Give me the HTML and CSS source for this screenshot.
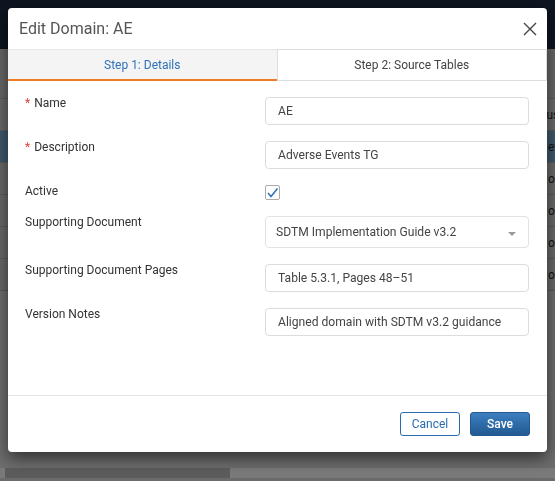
FILE: index.html
```html
<!DOCTYPE html>
<html lang="en">
<head>
    <meta charset="UTF-8">
    <meta name="viewport" content="width=device-width, initial-scale=1.0">
    <title>Edit Domain</title>
    <link rel="stylesheet" href="styles.css">
</head>
<body>
    <div class="app">
        <div class="topbar"></div>
        <div class="toolbar"></div>
        <div class="grid">
            <div class="grid-row grid-head"><span class="cell">Status</span></div>
            <div class="grid-row is-selected"><span class="cell cell-edge">ev</span></div>
            <div class="grid-row"><span class="cell cell-edge">o</span></div>
            <div class="grid-row"><span class="cell cell-edge">o</span></div>
            <div class="grid-row"><span class="cell cell-edge">o</span></div>
            <div class="grid-row"><span class="cell cell-edge">o</span></div>
        </div>
        <div class="filler"></div>
        <div class="hscroll"><div class="hscroll-thumb"></div></div>
    </div>

    <div class="modal">
        <div class="modal-header">
            <h2 class="modal-title">Edit Domain: AE</h2>
            <button class="close-btn" aria-label="Close">
                <svg width="14" height="14" viewBox="0 0 14 14">
                    <path d="M1 1 L13 13 M13 1 L1 13" stroke="#444" stroke-width="1.4" fill="none"/>
                </svg>
            </button>
        </div>

        <div class="tabs">
            <div class="tab active">Step 1: Details</div>
            <div class="tab">Step 2: Source Tables</div>
        </div>

        <div class="modal-body">
            <div class="field">
                <label class="field-label"><span class="req">*</span>Name</label>
                <input class="input" type="text" value="AE">
            </div>
            <div class="field">
                <label class="field-label"><span class="req">*</span>Description</label>
                <input class="input" type="text" value="Adverse Events TG">
            </div>
            <div class="field">
                <label class="field-label">Active</label>
                <span class="checkbox">
                    <svg width="13" height="13" viewBox="0 0 13 13">
                        <path d="M2 7 L5 10.5 L11.5 2.5" stroke="#2f72b8" stroke-width="1.6" fill="none"/>
                    </svg>
                </span>
            </div>
            <div class="field">
                <label class="field-label">Supporting Document</label>
                <div class="select">
                    <span>SDTM Implementation Guide v3.2</span>
                    <span class="caret"></span>
                </div>
            </div>
            <div class="field">
                <label class="field-label">Supporting Document Pages</label>
                <input class="input" type="text" value="Table 5.3.1, Pages 48&#8211;51">
            </div>
            <div class="field">
                <label class="field-label">Version Notes</label>
                <input class="input" type="text" value="Aligned domain with SDTM v3.2 guidance">
            </div>
        </div>

        <div class="modal-footer">
            <button class="btn btn-outline">Cancel</button>
            <button class="btn btn-primary">Save</button>
        </div>
    </div>
</body>
</html>
```
FILE: styles.css
```css
body {
    margin: 0;
    font-family: Roboto, "Liberation Sans", sans-serif;
    overflow: hidden;
    background-color: #6b6b6b;
}

.app {
    height: 100vh;
    display: flex;
    flex-direction: column;
}

.topbar {
    height: 49px;
    background-color: #0e1520;
}

.toolbar {
    height: 49px;
    background-color: #676767;
    border-bottom: 1px solid #5a5a5a;
}

.grid-row {
    height: 31px;
    display: flex;
    align-items: center;
    border-bottom: 1px solid #5a5a5a;
    background-color: #686868;
    font-size: 12px;
    color: #111;
    white-space: nowrap;
}

.grid-head {
    background-color: #6a6a6a;
}

.grid-row.is-selected {
    background-color: #3f586a;
}

.cell {
    margin-left: 525px;
}

.cell-edge {
    margin-left: 548px;
}

.filler {
    flex: 1;
    background-color: #6d6d6d;
}

.hscroll {
    height: 10px;
    margin: 0 0 3px 0;
    padding-left: 5px;
    background-color: #7a7a7a;
}

.hscroll-thumb {
    width: 225px;
    height: 100%;
    background-color: #5c5c5c;
}

/* dialog */
.modal {
    position: fixed;
    top: 8px;
    left: 8px;
    width: 539px;
    height: 444px;
    background-color: #fff;
    border-radius: 4px;
    box-shadow: 0 6px 16px rgba(0, 0, 0, 0.55);
    display: flex;
    flex-direction: column;
    overflow: hidden;
}

.modal-header {
    height: 41px;
    display: flex;
    align-items: center;
    justify-content: space-between;
    padding: 0 10px 0 11px;
}

.modal-title {
    margin: 0;
    font-size: 16px;
    font-weight: 400;
    color: #555;
}

.close-btn {
    border: none;
    background: none;
    padding: 0;
    width: 14px;
    height: 14px;
    cursor: pointer;
    display: flex;
}

.tabs {
    display: flex;
    height: 32px;
}

.tab {
    flex: 1;
    box-sizing: border-box;
    text-align: center;
    font-size: 12px;
    line-height: 30px;
    color: #444;
    border: 1px solid #dedede;
    background-color: #fff;
}

.tab.active {
    color: #2f72b8;
    background-color: #f4f4f4;
    border: none;
    border-top: 1px solid #e6e6e6;
    border-bottom: 2px solid #f37a26;
}

.modal-body {
    flex: 1;
    padding: 16px 18px 0 17px;
}

.field {
    display: flex;
    align-items: flex-start;
    margin-bottom: 16px;
}

.field-label {
    width: 240px;
    flex-shrink: 0;
    font-size: 12px;
    line-height: 14px;
    margin-top: -1px;
    color: #333;
}

.req {
    color: #d9453c;
    margin-right: 4px;
}

.input {
    flex: 1;
    min-width: 0;
    height: 28px;
    box-sizing: border-box;
    border: 1px solid #dcdcdc;
    border-radius: 4px;
    padding: 0 12px;
    font-family: Roboto, "Liberation Sans", sans-serif;
    font-size: 12.1px;
    color: #444;
    outline: none;
}

.checkbox {
    width: 15px;
    height: 15px;
    box-sizing: border-box;
    border: 1px solid #aaa;
    border-radius: 2px;
    display: flex;
    align-items: center;
    justify-content: center;
}

.select {
    flex: 1;
    height: 32px;
    box-sizing: border-box;
    border: 1px solid #e2e2e2;
    border-radius: 4px;
    padding: 0 12px 0 10px;
    display: flex;
    align-items: center;
    justify-content: space-between;
    font-size: 12.1px;
    color: #444;
}

.caret {
    width: 0;
    height: 0;
    border-left: 4px solid transparent;
    border-right: 4px solid transparent;
    border-top: 4px solid #9a9a9a;
    margin-top: 3px;
}

.modal-footer {
    border-top: 1px solid #e5e5e5;
    padding: 16px 17px;
    display: flex;
    justify-content: flex-end;
    gap: 10px;
}

.btn {
    width: 60px;
    height: 24px;
    border-radius: 3px;
    font-family: Roboto, "Liberation Sans", sans-serif;
    font-size: 12px;
    cursor: pointer;
    padding: 0;
}

.btn-outline {
    background-color: #fff;
    border: 1px solid #2a6cb0;
    color: #2a6cb0;
}

.btn-primary {
    background: linear-gradient(#3c7ebf, #225a92);
    border: 1px solid #22598f;
    color: #fff;
    font-weight: 500;
}
```
